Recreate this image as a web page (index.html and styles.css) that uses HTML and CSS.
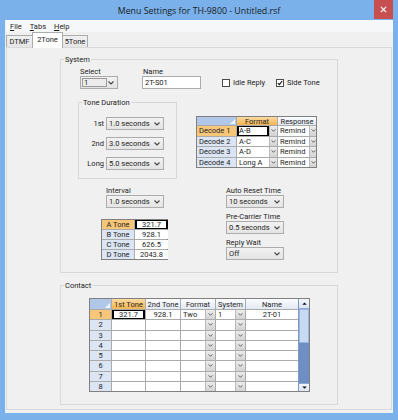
FILE: index.html
```html
<!DOCTYPE html>
<html lang="en">
<head>
<meta charset="utf-8">
<title>Menu Settings for TH-9800 - Untitled.rsf</title>
<link rel="stylesheet" href="styles.css">
</head>
<body>
<div class="window">
  <div class="titlebar">
    <div class="title">Menu Settings for TH-9800 - Untitled.rsf</div>
    <div class="close"><svg width="8" height="8" viewBox="0 0 8 8"><path d="M1 1L7 7M7 1L1 7" stroke="#fff" stroke-width="1.4"/></svg></div>
  </div>
  <div class="client">
    <div class="menubar">
      <span class="menu"><u>F</u>ile</span>
      <span class="menu"><u>T</u>abs</span>
      <span class="menu"><u>H</u>elp</span>
    </div>
    <div class="tabstrip">
      <div class="tab first">DTMF</div>
      <div class="tab active">2Tone</div>
      <div class="tab last">5Tone</div>
    </div>
    <div class="page">
      <div class="group system">
        <div class="legend">System</div>
        <div class="row1">
          <div class="field f-select">
            <div class="lbl">Select</div>
            <div class="combo sel"><span class="selbox">1</span><svg class="chev" viewBox="0 0 6 4"><path d="M0.5 0.5L3 3L5.5 0.5"/></svg></div>
          </div>
          <div class="field f-name">
            <div class="lbl pad1">Name</div>
            <div class="textbox">2T-S01</div>
          </div>
          <div class="check first-check"><span class="box"></span><span>Idle Reply</span></div>
          <div class="check"><span class="box"><svg viewBox="0 0 7 7"><path d="M1 3.6L2.8 5.4L6 1.2"/></svg></span><span>Side Tone</span></div>
        </div>
        <div class="row2">
          <div class="group tonedur">
            <div class="legend">Tone Duration</div>
            <div class="durrow first-dur"><span class="durlbl">1st</span><div class="combo"><span>1.0 seconds</span><svg class="chev" viewBox="0 0 6 4"><path d="M0.5 0.5L3 3L5.5 0.5"/></svg></div></div>
            <div class="durrow"><span class="durlbl">2nd</span><div class="combo"><span>3.0 seconds</span><svg class="chev" viewBox="0 0 6 4"><path d="M0.5 0.5L3 3L5.5 0.5"/></svg></div></div>
            <div class="durrow"><span class="durlbl">Long</span><div class="combo"><span>5.0 seconds</span><svg class="chev" viewBox="0 0 6 4"><path d="M0.5 0.5L3 3L5.5 0.5"/></svg></div></div>
          </div>
          <div class="g decode">
            <div class="corner"><svg class="tri" viewBox="0 0 5 5"><path d="M5 0V5H0Z"/></svg></div>
            <div class="hd on">Format</div>
            <div class="hd">Response</div>

            <div class="rh on l2">Decode 1</div>
            <div class="ddc"><span class="t cur">A-B</span><span class="btn"><svg class="chev" viewBox="0 0 6 4"><path d="M0.5 0.5L3 3L5.5 0.5"/></svg></span></div>
            <div class="ddc"><span class="t">Remind</span><span class="btn b7"><svg class="chev" viewBox="0 0 6 4"><path d="M0.5 0.5L3 3L5.5 0.5"/></svg></span></div>

            <div class="rh l2">Decode 2</div>
            <div class="ddc"><span class="t">A-C</span><span class="btn"><svg class="chev" viewBox="0 0 6 4"><path d="M0.5 0.5L3 3L5.5 0.5"/></svg></span></div>
            <div class="ddc"><span class="t">Remind</span><span class="btn b7"><svg class="chev" viewBox="0 0 6 4"><path d="M0.5 0.5L3 3L5.5 0.5"/></svg></span></div>

            <div class="rh l2">Decode 3</div>
            <div class="ddc"><span class="t">A-D</span><span class="btn"><svg class="chev" viewBox="0 0 6 4"><path d="M0.5 0.5L3 3L5.5 0.5"/></svg></span></div>
            <div class="ddc"><span class="t">Remind</span><span class="btn b7"><svg class="chev" viewBox="0 0 6 4"><path d="M0.5 0.5L3 3L5.5 0.5"/></svg></span></div>

            <div class="rh l2">Decode 4</div>
            <div class="ddc"><span class="t">Long A</span><span class="btn"><svg class="chev" viewBox="0 0 6 4"><path d="M0.5 0.5L3 3L5.5 0.5"/></svg></span></div>
            <div class="ddc"><span class="t">Remind</span><span class="btn b7"><svg class="chev" viewBox="0 0 6 4"><path d="M0.5 0.5L3 3L5.5 0.5"/></svg></span></div>
          </div>
        </div>
        <div class="row3">
          <div class="col-left">
            <div class="lbl ind">Interval</div>
            <div class="combo ind"><span>1.0 seconds</span><svg class="chev" viewBox="0 0 6 4"><path d="M0.5 0.5L3 3L5.5 0.5"/></svg></div>
            <div class="g tones">
              <div class="rh on c">A Tone</div><div class="c cur">321.7</div>
              <div class="rh c">B Tone</div><div class="c">928.1</div>
              <div class="rh c">C Tone</div><div class="c">626.5</div>
              <div class="rh c">D Tone</div><div class="c">2043.8</div>
            </div>
          </div>
          <div class="col-right">
            <div class="lbl">Auto Reset Time</div>
            <div class="combo"><span>10 seconds</span><svg class="chev" viewBox="0 0 6 4"><path d="M0.5 0.5L3 3L5.5 0.5"/></svg></div>
            <div class="lbl gap4">Pre-Carrier Time</div>
            <div class="combo"><span>0.5 seconds</span><svg class="chev" viewBox="0 0 6 4"><path d="M0.5 0.5L3 3L5.5 0.5"/></svg></div>
            <div class="lbl gap4">Reply Wait</div>
            <div class="combo"><span>Off</span><svg class="chev" viewBox="0 0 6 4"><path d="M0.5 0.5L3 3L5.5 0.5"/></svg></div>
          </div>
        </div>
      </div>

      <div class="group contact">
        <div class="legend">Contact</div>
        <div class="cwrap">
          <div class="g cgrid">
            <div class="corner"><svg class="tri" viewBox="0 0 5 5"><path d="M5 0V5H0Z"/></svg></div>
            <div class="hd on">1st Tone</div>
            <div class="hd">2nd Tone</div>
            <div class="hd">Format</div>
            <div class="hd">System</div>
            <div class="hd">Name</div>

            <div class="rh on c">1</div>
            <div class="c cur">321.7</div>
            <div class="c">928.1</div>
            <div class="ddc"><span class="t">Two</span><span class="btn b10"><svg class="chev" viewBox="0 0 6 4"><path d="M0.5 0.5L3 3L5.5 0.5"/></svg></span></div>
            <div class="ddc"><span class="t">1</span><span class="btn b10"><svg class="chev" viewBox="0 0 6 4"><path d="M0.5 0.5L3 3L5.5 0.5"/></svg></span></div>
            <div class="c">2T-01</div>

            <div class="rh c">2</div><div></div><div></div>
            <div class="ddc"><span class="t"></span><span class="btn b10"><svg class="chev" viewBox="0 0 6 4"><path d="M0.5 0.5L3 3L5.5 0.5"/></svg></span></div>
            <div class="ddc"><span class="t"></span><span class="btn b10"><svg class="chev" viewBox="0 0 6 4"><path d="M0.5 0.5L3 3L5.5 0.5"/></svg></span></div>
            <div></div>

            <div class="rh c">3</div><div></div><div></div>
            <div class="ddc"><span class="t"></span><span class="btn b10"><svg class="chev" viewBox="0 0 6 4"><path d="M0.5 0.5L3 3L5.5 0.5"/></svg></span></div>
            <div class="ddc"><span class="t"></span><span class="btn b10"><svg class="chev" viewBox="0 0 6 4"><path d="M0.5 0.5L3 3L5.5 0.5"/></svg></span></div>
            <div></div>

            <div class="rh c">4</div><div></div><div></div>
            <div class="ddc"><span class="t"></span><span class="btn b10"><svg class="chev" viewBox="0 0 6 4"><path d="M0.5 0.5L3 3L5.5 0.5"/></svg></span></div>
            <div class="ddc"><span class="t"></span><span class="btn b10"><svg class="chev" viewBox="0 0 6 4"><path d="M0.5 0.5L3 3L5.5 0.5"/></svg></span></div>
            <div></div>

            <div class="rh c">5</div><div></div><div></div>
            <div class="ddc"><span class="t"></span><span class="btn b10"><svg class="chev" viewBox="0 0 6 4"><path d="M0.5 0.5L3 3L5.5 0.5"/></svg></span></div>
            <div class="ddc"><span class="t"></span><span class="btn b10"><svg class="chev" viewBox="0 0 6 4"><path d="M0.5 0.5L3 3L5.5 0.5"/></svg></span></div>
            <div></div>

            <div class="rh c">6</div><div></div><div></div>
            <div class="ddc"><span class="t"></span><span class="btn b10"><svg class="chev" viewBox="0 0 6 4"><path d="M0.5 0.5L3 3L5.5 0.5"/></svg></span></div>
            <div class="ddc"><span class="t"></span><span class="btn b10"><svg class="chev" viewBox="0 0 6 4"><path d="M0.5 0.5L3 3L5.5 0.5"/></svg></span></div>
            <div></div>

            <div class="rh c">7</div><div></div><div></div>
            <div class="ddc"><span class="t"></span><span class="btn b10"><svg class="chev" viewBox="0 0 6 4"><path d="M0.5 0.5L3 3L5.5 0.5"/></svg></span></div>
            <div class="ddc"><span class="t"></span><span class="btn b10"><svg class="chev" viewBox="0 0 6 4"><path d="M0.5 0.5L3 3L5.5 0.5"/></svg></span></div>
            <div></div>

            <div class="rh c">8</div><div></div><div></div>
            <div class="ddc"><span class="t"></span><span class="btn b10"><svg class="chev" viewBox="0 0 6 4"><path d="M0.5 0.5L3 3L5.5 0.5"/></svg></span></div>
            <div class="ddc"><span class="t"></span><span class="btn b10"><svg class="chev" viewBox="0 0 6 4"><path d="M0.5 0.5L3 3L5.5 0.5"/></svg></span></div>
            <div></div>
          </div>
          <div class="vscroll">
            <div class="sbtn"><svg viewBox="0 0 6 4"><path d="M0 3.5L3 0.5L6 3.5Z"/></svg></div>
            <div class="thumb"></div>
            <div class="track"></div>
            <div class="sbtn down"><svg viewBox="0 0 6 4"><path d="M0 0.5L3 3.5L6 0.5Z"/></svg></div>
          </div>
        </div>
      </div>
    </div>
  </div>
</div>
</body>
</html>
```

FILE: styles.css
```css
* { box-sizing: border-box; }
html, body { margin: 0; padding: 0; }
body {
  width: 398px;
  height: 420px;
  overflow: hidden;
  font-family: Roboto, "Liberation Sans", Arial, sans-serif;
  font-size: 7.5px;
  color: #1e1e1e;
  background: #7ab1ea;
}
.window {
  width: 398px;
  height: 420px;
  background: #7ab1ea;
  display: flex;
  flex-direction: column;
  padding: 0 5px 7px 5px;
}
.titlebar {
  height: 20px;
  flex: none;
  display: grid;
  grid-template-columns: 1fr auto 1fr;
  align-items: center;
}
.title {
  grid-column: 2;
  font-family: "Open Sans", "Liberation Sans", sans-serif;
  font-size: 8.8px;
  color: #1b1b1b;
  white-space: nowrap;
  padding-top: 1px;
}
.close {
  grid-column: 3;
  justify-self: end;
  align-self: start;
  width: 19px;
  height: 19px;
  background: #c74f4f;
  display: flex;
  align-items: center;
  justify-content: center;
}
.close svg { width: 7px; height: 7px; }
.client {
  flex: 1;
  background: #f0f0f0;
  display: flex;
  flex-direction: column;
  border-left: 1px solid #e9f1fb;
}
.menubar {
  height: 12px;
  flex: none;
  display: flex;
  align-items: center;
  gap: 8px;
  padding-left: 4px;
  background: #f6f7f8;
}
.menu u { text-decoration-thickness: 1px; text-underline-offset: 1px; }
.tabstrip {
  height: 15px;
  flex: none;
  display: flex;
  align-items: flex-end;
  position: relative;
  z-index: 1;
}
.tab {
  height: 12px;
  border: 1px solid #acacac;
  border-bottom: none;
  background: linear-gradient(#f0f0f0, #e5e5e5);
  display: flex;
  align-items: center;
  justify-content: center;
}
.tab.first { width: 27px; margin-left: 0; }
.tab.last { width: 26px; margin-left: -1px; }
.tab.active {
  width: 31px;
  height: 16px;
  margin-left: -1px;
  margin-bottom: -1px;
  background: #fff;
  position: relative;
  z-index: 2;
  padding-bottom: 2px;
}
.page {
  flex: 1;
  margin: 0 1px 3px 0;
  border: 1px solid #d9d9d9;
  background: #f0f0f0;
  padding: 11px 0 0 53px;
}
.group {
  border: 1px solid #d8d8d8;
}
.legend {
  width: max-content;
  margin: -5px 0 0 3px;
  padding: 0 1px;
  line-height: 9px;
  height: 9px;
  background: #f0f0f0;
}
.system { width: 278px; height: 214px; }
.contact { width: 278px; height: 120px; margin-top: 12px; }
.lbl { line-height: 9px; height: 9px; white-space: nowrap; }
.pad1 { padding-left: 1px; }
.row1 { display: flex; margin: 3px 0 0 19px; }
.f-select { width: 38px; }
.f-name { margin-left: 24px; }
.combo {
  width: 58px;
  height: 13px;
  border: 1px solid #acacac;
  background: linear-gradient(#f2f2f2, #e4e4e4);
  display: flex;
  align-items: center;
  justify-content: space-between;
  padding: 0 3px 0 2px;
  white-space: nowrap;
}
.chev { width: 6px; height: 4px; flex: none; }
.chev path { fill: none; stroke: #444; stroke-width: 1.1; }
.combo.sel { width: 38px; padding: 1px 3px 1px 1px; }
.selbox {
  width: 25px;
  height: 100%;
  border: 1px solid #9a9a9a;
  background: #ececec;
  padding-left: 1px;
  display: flex;
  align-items: center;
}
.textbox {
  width: 59px;
  height: 13px;
  border: 1px solid #abadb3;
  background: #fff;
  display: flex;
  align-items: center;
  padding-left: 2px;
}
.check {
  display: flex;
  align-items: center;
  gap: 3px;
  width: 54px;
  height: 9px;
  margin-top: 11px;
  white-space: nowrap;
}
.first-check { margin-left: 21px; }
.box {
  width: 8px;
  height: 8px;
  border: 1px solid #4a4a4a;
  background: #fff;
  flex: none;
  display: flex;
  align-items: center;
  justify-content: center;
}
.box svg { width: 6px; height: 6px; }
.box path { fill: none; stroke: #111; stroke-width: 1.3; }
.row2 { display: flex; align-items: flex-start; margin-top: 13px; }
.tonedur { width: 99px; height: 77px; margin-left: 17px; flex: none; }
.durrow { display: flex; align-items: center; margin-top: 7px; }
.durrow.first-dur { margin-top: 10px; }
.durlbl { width: 27px; text-align: right; padding-right: 2px; }
.g {
  display: grid;
  gap: 1px;
  background: #ababab;
  border: 1px solid #808080;
}
.g > div {
  background: #fff;
  display: flex;
  align-items: center;
  white-space: nowrap;
  overflow: hidden;
}
.g > .c { justify-content: center; }
.g > .l2 { padding-left: 2px; }
.g > .hd { justify-content: center; background: linear-gradient(#fbfcfe, #e2e9f3); }
.g > .hd.on { background: linear-gradient(#fcdba0, #f4b44f); }
.g > .corner { background: #b0c7e7; justify-content: flex-end; align-items: flex-end; }
.tri { width: 5px; height: 5px; margin: 0 1px 1px 0; }
.tri path { fill: #eef3fa; }
.g > .rh { background: #dbe5f3; }
.g > .rh.on { background: #f7c678; }
.cur {
  box-shadow: inset 2px 0 0 #000, inset -2px 0 0 #000, inset 0 1px 0 #000, inset 0 -1px 0 #000;
}
.g > .ddc { padding: 0; }
.ddc .t {
  flex: 1;
  height: 100%;
  display: flex;
  align-items: center;
  padding-left: 2px;
}
.ddc .btn {
  width: 8px;
  height: 100%;
  flex: none;
  background: linear-gradient(#ececec, #d3d3d3);
  border-left: 1px solid #b9b9b9;
  display: flex;
  align-items: center;
  justify-content: center;
}
.ddc .btn.b7 { width: 7px; }
.ddc .btn.b10 { width: 10px; }
.ddc .btn .chev { width: 5px; height: 3px; }
.decode {
  margin: 14px 0 0 19px;
  grid-template-columns: 39px 40px 38px;
  grid-template-rows: 8px repeat(4, 9.5px);
}
.row3 { display: flex; margin-top: 7px; }
.col-left { width: 67px; margin-left: 40px; }
.ind { margin-left: 5px; }
.tones {
  margin-top: 11px;
  grid-template-columns: 32px 33px;
  grid-template-rows: repeat(4, 9px);
}
.col-right { margin-left: 58px; width: 58px; }
.gap4 { margin-top: 4px; }
.cwrap {
  display: flex;
  width: 221px;
  margin: 8px 0 0 28px;
  border: 1px solid #808080;
}
.cgrid {
  border: none;
  grid-template-columns: 21px 33px 34px 34px 29px 52px;
  grid-template-rows: 10px repeat(8, 9.25px);
}
.vscroll {
  width: 11px;
  flex: none;
  display: flex;
  flex-direction: column;
  border-left: 1px solid #7f98c2;
  background: #6c8ec3;
}
.sbtn {
  height: 10px;
  background: linear-gradient(#f3f6fb, #dde6f3);
  border-bottom: 1px solid #8ea9d3;
  display: flex;
  align-items: center;
  justify-content: center;
}
.sbtn.down { height: 8px; border-bottom: none; border-top: 1px solid #8ea9d3; }
.sbtn svg { width: 5px; height: 3px; }
.sbtn path { fill: #111; }
.thumb {
  height: 34px;
  background: #c8daf1;
  border: 1px solid #9bb6de;
}
.track { flex: 1; background: #6d8fc4; }
```
